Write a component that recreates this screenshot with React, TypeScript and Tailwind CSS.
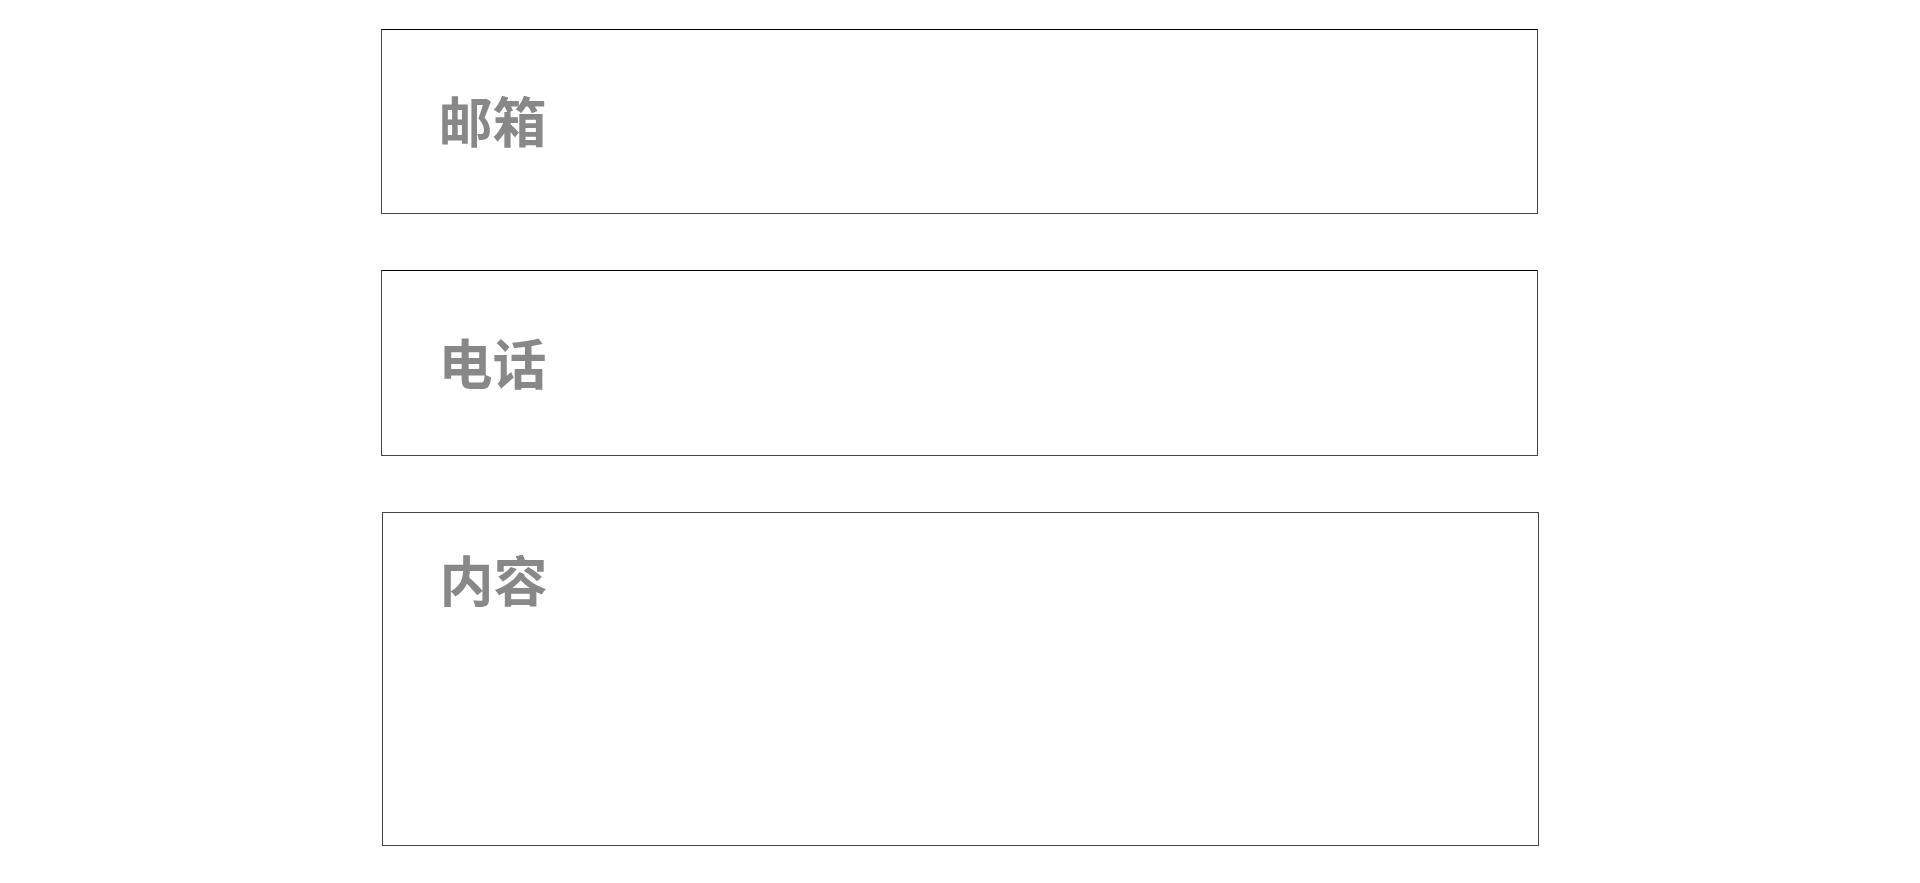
import React from "react";

const font = { fontFamily: '"Noto Sans CJK SC", "Noto Sans", sans-serif' };

function ContactForm() {
  return (
    <div className="min-h-screen bg-white flex flex-col items-center pt-[29px] gap-[56px]" style={font}>
      <input
        type="text"
        placeholder="邮箱"
        className="-ml-[2px] w-[1157px] h-[185px] border border-[#444] border-t-black pl-[57px] pb-[4px] text-[54px] font-semibold text-[#333] placeholder:text-[#888] outline-none"
      />
      <input
        type="text"
        placeholder="电话"
        className="-ml-[2px] w-[1157px] h-[186px] border border-[#444] border-t-black pl-[57px] pb-[4px] text-[54px] font-semibold text-[#333] placeholder:text-[#888] outline-none"
      />
      <textarea
        placeholder="内容"
        className="w-[1157px] h-[334px] border border-[#444] pl-[57px] pt-[27px] text-[54px] font-semibold leading-[1.45] text-[#333] placeholder:text-[#888] outline-none resize-none"
      />
    </div>
  );
}

export default ContactForm;
